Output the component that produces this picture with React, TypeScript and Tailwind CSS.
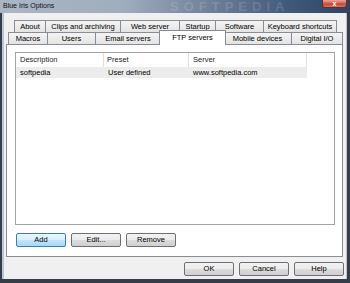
import React from 'react'

const font = "font-['Liberation_Sans',Arial,sans-serif]"

const backTabs = [
  { label: 'About', w: 'w-[32px]' },
  { label: 'Clips and archiving', w: 'w-[76px]' },
  { label: 'Web server', w: 'w-[60px]' },
  { label: 'Startup', w: 'w-[37px]' },
  { label: 'Software', w: 'w-[49px]' },
  { label: 'Keyboard shortcuts', w: 'w-[74px]' },
]

const frontTabs = [
  { label: 'Macros', w: 'w-[40px]' },
  { label: 'Users', w: 'w-[49px]' },
  { label: 'Email servers', w: 'w-[66px]' },
  { label: 'FTP servers', w: 'w-[67px]', active: true },
  { label: 'Mobile devices', w: 'w-[69px]' },
  { label: 'Digital I/O', w: 'w-[52px]' },
]

function Tab({ label, w, active }: { label: string; w: string; active?: boolean }) {
  if (active) {
    return (
      <div
        className={`${w} relative z-10 -mx-[2px] -mb-px flex h-[15px] shrink-0 items-start justify-center border border-b-0 border-[#898c95] bg-white pt-[3px] text-[7.5px] leading-none text-black`}
      >
        {label}
      </div>
    )
  }
  return (
    <div
      className={`${w} -ml-px flex h-[12px] shrink-0 items-center justify-center border border-b-0 border-[#898c95] bg-gradient-to-b from-[#f4f4f4] to-[#e3e3e3] text-[7.5px] leading-none text-black first:ml-0`}
    >
      {label}
    </div>
  )
}

function Button({ label, primary }: { label: string; primary?: boolean }) {
  return (
    <div
      className={`flex h-[14px] w-[50px] items-center justify-center rounded-[2px] border text-[7.5px] leading-none text-black ${
        primary
          ? 'border-[#3c7fb1] bg-[linear-gradient(#eaf6fd_0%,#d9f0fc_50%,#bee6fd_50%,#a7d9f5_100%)]'
          : 'border-[#707070] bg-[linear-gradient(#f2f2f2_0%,#ebebeb_50%,#dddddd_50%,#cfcfcf_100%)]'
      }`}
    >
      {label}
    </div>
  )
}

export default function App() {
  return (
    <div className={`relative flex h-[283px] w-[350px] flex-col overflow-hidden bg-[#343d4a] ${font}`}>
      {/* Title bar */}
      <div className="flex h-[13px] shrink-0 items-start justify-between bg-[linear-gradient(to_right,#aab6c5_0%,#a0adbd_35%,#73849b_58%,#425a7a_82%,#2c4565_100%)] pl-[3px] pr-[3px]">
        <span className="pt-[2px] text-[7px] leading-none text-[#111]">Blue Iris Options</span>
        <div className="flex h-[8px] w-[25px] items-center justify-center rounded-b-[3px] border border-t-0 border-[#6b2a24] bg-[linear-gradient(#e9a597_0%,#d3675a_45%,#c24434_55%,#d27a62_100%)] text-[7px] font-bold leading-none text-white">
          x
        </div>
      </div>

      {/* watermark */}
      <div className="pointer-events-none absolute left-[170px] top-0 text-[13px] font-bold leading-none tracking-[5px] text-white/15">
        SOFTPEDIA
      </div>

      {/* Frame + client */}
      <div className="flex flex-1 pb-[4px] pl-[2px] pr-[3px]">
        <div className="flex flex-1 bg-[#bcc6d2] pl-[2px] pr-px">
          <div className="flex flex-1 flex-col bg-[#f0f0f0] pr-[2px] pt-[7px]">
            {/* Tab rows */}
            <div className="ml-[10px] flex h-[12px]">
              {backTabs.map((t) => (
                <Tab key={t.label} {...t} />
              ))}
            </div>
            <div className="ml-[4px] flex h-[12px] items-end">
              {frontTabs.map((t) => (
                <Tab key={t.label} {...t} />
              ))}
            </div>

            {/* Panel */}
            <div className="ml-[2px] mr-px flex h-[213px] flex-col border border-[#898c95] bg-white pl-[8px] pt-[7px]">
              <div className="flex h-[173px] w-[320px] flex-col border border-[#a3a3a3] bg-white text-[7.5px] leading-none text-black">
                <div className="flex h-[14px] shrink-0 text-[#1e1e1e]">
                  <div className="flex w-[88px] items-center border-r border-[#e2e2e2] pl-[4px]">Description</div>
                  <div className="flex w-[85px] items-center border-r border-[#e2e2e2] pl-[3px]">Preset</div>
                  <div className="flex w-[118px] items-center border-r border-[#e2e2e2] pl-[4px]">Server</div>
                  <div className="flex-1" />
                </div>
                <div className="flex h-[11px] w-[291px] shrink-0 bg-[#ececec]">
                  <div className="flex w-[88px] items-center pl-[4px]">softpedia</div>
                  <div className="flex w-[85px] items-center pl-[4px]">User defined</div>
                  <div className="flex w-[118px] items-center pl-[4px]">www.softpedia.com</div>
                </div>
              </div>
              <div className="ml-px mt-[8px] flex gap-[5px]">
                <Button label="Add" primary />
                <Button label="Edit..." />
                <Button label="Remove" />
              </div>
            </div>

            {/* Dialog buttons */}
            <div className="mt-[5px] flex justify-end gap-[5px]">
              <Button label="OK" />
              <Button label="Cancel" />
              <Button label="Help" />
            </div>
          </div>
        </div>
      </div>
    </div>
  )
}
